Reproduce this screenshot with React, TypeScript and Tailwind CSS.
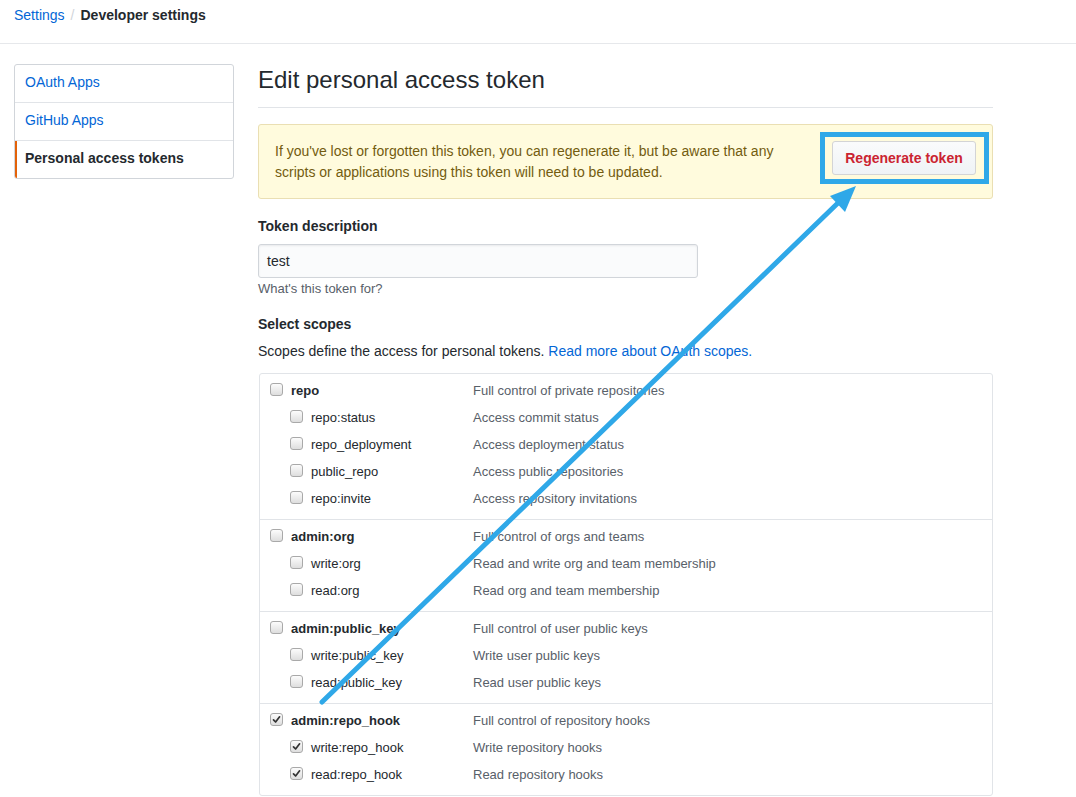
import React from "react";

interface Scope {
  name: string;
  description: string;
  checked?: boolean;
}

interface ScopeGroup {
  parent: Scope;
  children: Scope[];
}

const SCOPE_GROUPS: ScopeGroup[] = [
  {
    parent: { name: "repo", description: "Full control of private repositories" },
    children: [
      { name: "repo:status", description: "Access commit status" },
      { name: "repo_deployment", description: "Access deployment status" },
      { name: "public_repo", description: "Access public repositories" },
      { name: "repo:invite", description: "Access repository invitations" },
    ],
  },
  {
    parent: { name: "admin:org", description: "Full control of orgs and teams" },
    children: [
      { name: "write:org", description: "Read and write org and team membership" },
      { name: "read:org", description: "Read org and team membership" },
    ],
  },
  {
    parent: { name: "admin:public_key", description: "Full control of user public keys" },
    children: [
      { name: "write:public_key", description: "Write user public keys" },
      { name: "read:public_key", description: "Read user public keys" },
    ],
  },
  {
    parent: { name: "admin:repo_hook", description: "Full control of repository hooks", checked: true },
    children: [
      { name: "write:repo_hook", description: "Write repository hooks", checked: true },
      { name: "read:repo_hook", description: "Read repository hooks", checked: true },
    ],
  },
];

function Checkbox({ checked }: { checked?: boolean }) {
  return (
    <span className="mt-[-3px] flex h-[13px] w-[13px] shrink-0 items-center justify-center rounded-[3px] border border-[#a9a9a9] bg-gradient-to-b from-[#fcfcfc] to-[#dedede]">
      {checked && (
        <svg width="9" height="9" viewBox="0 0 9 9">
          <path d="M1.5 4.8 L3.6 7 L7.6 1.8" fill="none" stroke="#333" strokeWidth="1.7" strokeLinecap="round" strokeLinejoin="round" />
        </svg>
      )}
    </span>
  );
}

function ScopeRow({ scope, child }: { scope: Scope; child?: boolean }) {
  return (
    <div className="flex h-[27px] items-center text-[13px]">
      <div className={`flex w-[203px] items-center ${child ? "pl-[20px]" : ""}`}>
        <Checkbox checked={scope.checked} />
        <span className={`ml-[8px] text-[#24292e] ${child ? "" : "font-bold"}`}>
          {scope.name}
        </span>
      </div>
      <span className="text-[#586069]">{scope.description}</span>
    </div>
  );
}

export default function App() {
  return (
    <div className="relative h-[797px] overflow-hidden bg-white text-[14px] text-[#24292e] [font-family:'Liberation_Sans',Arial,sans-serif]">
      {/* Breadcrumb header */}
      <div className="flex h-[44px] items-start border-b border-[#e6e8eb] px-[14px] pt-[5px] leading-[21px]">
        <a className="text-[#0366d6]">Settings</a>
        <span className="mx-[6px] text-[#d1d5da]">/</span>
        <span className="font-bold">Developer settings</span>
      </div>

      <div className="flex gap-[24px] px-[14px] pt-[20px]">
        {/* Sidebar */}
        <nav className="w-[220px] shrink-0 self-start overflow-hidden rounded-[3px] border border-[#d1d5da]">
          <div className="border-b border-[#e1e4e8] px-[10px] pt-[7px] pb-[9px] leading-[21px] text-[#0366d6]">OAuth Apps</div>
          <div className="border-b border-[#e1e4e8] px-[10px] pt-[7px] pb-[9px] leading-[21px] text-[#0366d6]">GitHub Apps</div>
          <div className="border-l-2 border-[#e36209] px-[8px] pt-[7px] pb-[9px] leading-[21px] font-bold">Personal access tokens</div>
        </nav>

        {/* Main */}
        <main className="w-[735px] shrink-0">
          <div className="border-b border-[#e1e4e8] pb-[11px]">
            <h2 className="text-[24px] leading-[32px] font-normal">Edit personal access token</h2>
          </div>

          <div className="mt-[16px] flex items-start justify-between rounded-[3px] border border-[#eadfb3] bg-[#fffbdd] px-[16px] pt-[16px] pb-[15px] leading-[21px] text-[#735c0f]">
            <p>
              If you've lost or forgotten this token, you can regenerate it, but be aware that any
              <br />
              scripts or applications using this token will need to be updated.
            </p>
            <button className="h-[34px] w-[144px] rounded-[3px] border border-[#d3d4d6] bg-gradient-to-b from-[#fafbfc] to-[#eff3f6] font-bold text-[#cb2431]">
              Regenerate token
            </button>
          </div>

          <div className="mt-[17px] font-bold leading-[21px]">Token description</div>
          <div className="mt-[7px] flex h-[34px] w-[440px] items-center rounded-[3px] border border-[#d1d5da] bg-[#fafbfc] px-[8px] shadow-[inset_0_1px_2px_rgba(27,31,35,0.075)]">
            test
          </div>
          <p className="mt-[1px] text-[13px] leading-[20px] text-[#586069]">What's this token for?</p>

          <div className="mt-[15px] font-bold leading-[21px]">Select scopes</div>
          <p className="mt-[6px] leading-[21px]">
            Scopes define the access for personal tokens.{" "}
            <a className="text-[#0366d6]">Read more about OAuth scopes.</a>
          </p>

          <div className="mt-[11px] ml-[1px] overflow-hidden rounded-[3px] border border-[#e1e4e8]">
            {SCOPE_GROUPS.map((group, i) => (
              <div
                key={group.parent.name}
                className={`px-[10px] pt-[3px] pb-[7px] ${i > 0 ? "border-t border-[#e1e4e8]" : ""}`}
              >
                <ScopeRow scope={group.parent} />
                {group.children.map((c) => (
                  <ScopeRow key={c.name} scope={c} child />
                ))}
              </div>
            ))}
          </div>
        </main>
      </div>

      {/* Annotation overlay: highlight box and arrow */}
      <div className="pointer-events-none absolute left-[820px] top-[132px] h-[52px] w-[169px] border-[5px] border-[#2fa8e8]" />
      <svg className="pointer-events-none absolute left-0 top-0" width="1076" height="797">
        <line x1="322" y1="702" x2="840" y2="201" stroke="#2fa8e8" strokeWidth="5" strokeLinecap="round" />
        <polygon points="856,186 845,212 830,196" fill="#2fa8e8" />
      </svg>
    </div>
  );
}
